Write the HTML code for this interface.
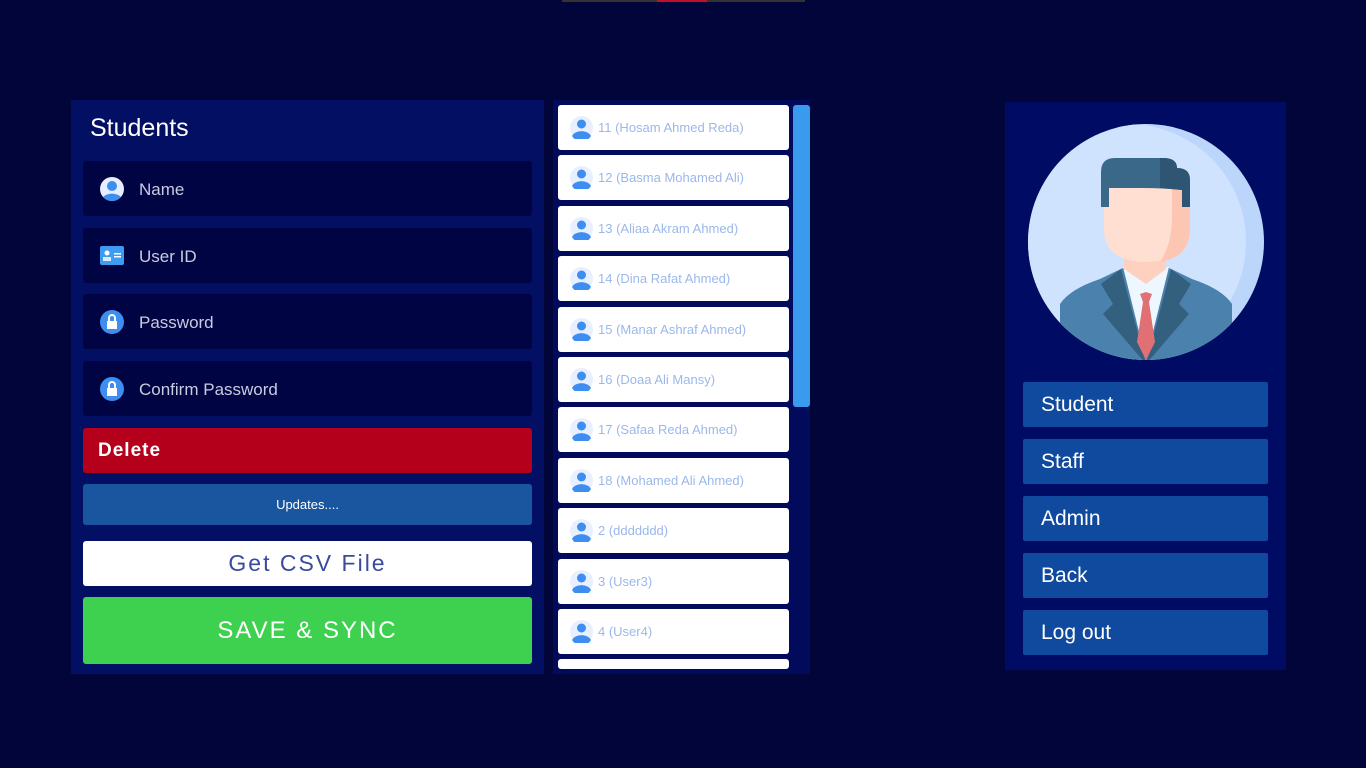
<!DOCTYPE html><html><head><style>
body{margin:0;width:1366px;height:768px;background:#01053a;font-family:"Liberation Sans",sans-serif;position:relative;overflow:hidden}
.a{position:absolute}
.inp{position:absolute;left:83px;width:449px;height:55px;background:#000442;border-radius:3px;color:#c9cbe0;font-size:17px}
.inp span{position:absolute;left:56px;top:19px}
.inp svg{position:absolute;left:17px;top:16px}
.it{position:absolute;left:558px;width:231px;height:45px;background:#fff;border-radius:3px;color:#9bb8ea;font-size:13px}
.it span{position:absolute;left:40px;top:15px}
.it svg{position:absolute;left:12px;top:11px}
.rb{position:absolute;left:1023px;width:245px;height:45px;background:#0f4a9e;color:#fff;font-size:21px;border-radius:2px}
.rb span{position:absolute;left:18px;top:11px}
</style></head><body>
<div class="a" style="left:562px;top:0;width:243px;height:2px;background:#333"></div>
<div class="a" style="left:657px;top:0;width:50px;height:2px;background:#c0102a"></div>
<div class="a" style="left:71px;top:100px;width:473px;height:574px;background:#020f63"></div>
<div class="a" style="left:90px;top:114px;color:#fff;font-size:25px">Students</div>
<div class="inp" style="top:161px"><svg width="24" height="24"><circle cx="12" cy="12" r="12" fill="#e6eeff"/><circle cx="12" cy="9" r="5" fill="#3d8ef0"/><path d="M3 20a11 8 0 0 1 18 0a12 12 0 0 1-18 0z" fill="#3d8ef0"/></svg><span>Name</span></div>
<div class="inp" style="top:228px"><svg width="24" height="20" style="top:18px"><rect width="24" height="19" rx="2" fill="#3d9cf0"/><circle cx="7" cy="7" r="2.5" fill="#fff"/><rect x="3" y="11" width="8" height="4" fill="#d8ecff"/><rect x="14" y="7" width="7" height="1.5" fill="#fff"/><rect x="14" y="10" width="7" height="1.5" fill="#fff"/></svg><span>User ID</span></div>
<div class="inp" style="top:294px"><svg width="24" height="24"><circle cx="12" cy="12" r="12" fill="#3d8ef0"/><rect x="7" y="11" width="10" height="8" fill="#fff"/><path d="M9 11V8a3 3 0 0 1 6 0v3" stroke="#fff" stroke-width="2" fill="none"/></svg><span>Password</span></div>
<div class="inp" style="top:361px"><svg width="24" height="24"><circle cx="12" cy="12" r="12" fill="#3d8ef0"/><rect x="7" y="11" width="10" height="8" fill="#fff"/><path d="M9 11V8a3 3 0 0 1 6 0v3" stroke="#fff" stroke-width="2" fill="none"/></svg><span>Confirm Password</span></div>
<div class="a" style="left:83px;top:428px;width:449px;height:45px;background:#b5001c;border-radius:3px;color:#fff;font-size:19px;font-weight:bold;letter-spacing:1px"><span class="a" style="left:15px;top:12px">Delete</span></div>
<div class="a" style="left:83px;top:484px;width:449px;height:41px;background:#1a56a0;border-radius:3px;color:#fff;font-size:13px;text-align:center;line-height:41px">Updates....</div>
<div class="a" style="left:83px;top:541px;width:449px;height:45px;background:#fff;border-radius:3px;color:#3a4a9e;font-size:23px;text-align:center;line-height:45px;letter-spacing:2px">Get CSV File</div>
<div class="a" style="left:83px;top:597px;width:449px;height:67px;background:#3dd14f;border-radius:3px;color:#fff;font-size:24px;text-align:center;line-height:67px;letter-spacing:2px">SAVE &amp; SYNC</div>
<div class="a" style="left:553px;top:100px;width:257px;height:574px;background:#020a5c"></div>
<div class="a" style="left:793px;top:105px;width:17px;height:302px;background:#3a9aee;border-radius:3px"></div>
<div id="list"></div>
<div class="a" style="left:1005px;top:102px;width:281px;height:568px;background:#000c63"></div>
<svg class="a" style="left:1028px;top:124px" width="236" height="236" viewBox="0 0 236 236">
<defs><clipPath id="c"><circle cx="118" cy="118" r="118"/></clipPath></defs>
<circle cx="118" cy="118" r="118" fill="#bcd6fb"/>
<g clip-path="url(#c)">
<circle cx="100" cy="118" r="118" fill="#cfe3ff"/>
<path d="M32 180q10-15 40-25l25-12h42l25 12q30 10 40 25v60H32z" fill="#4b81ad"/>
<path d="M95 143l23 93l23-93z" fill="#eef6ff"/>
<path d="M93 145l-20 15l12 20l-10 10l43 50z M143 145l20 15l-12 20l10 10l-43 50z" fill="#34607f"/>
<path d="M112 170l6-2l6 2l-3 8l6 40l-9 18l-9-18l6-40z" fill="#e07073"/>
<path d="M96 110h42v35l-20 15l-22-15z" fill="#fdd0c0"/>
<path d="M76 60h86v45q0 32-44 33q-42-1-42-33z" fill="#ffdfd2"/>
<path d="M118 60h44v45q0 28-30 33q12-18 12-45v-33z" fill="#fdc6b2"/>
<path d="M73 83V48q0-14 14-14h48q14 0 14 10q13 0 13 12v27h-8V66q-20-2-40-2h-33v19z" fill="#3a6888"/>
<path d="M132 34h3q14 0 14 10q13 0 13 12v27h-8V66q-10-1-22-2z" fill="#2e5672"/>
</g></svg>
<div class="rb" style="top:382px"><span>Student</span></div>
<div class="rb" style="top:439px"><span>Staff</span></div>
<div class="rb" style="top:496px"><span>Admin</span></div>
<div class="rb" style="top:553px"><span>Back</span></div>
<div class="rb" style="top:610px"><span>Log out</span></div>
<script>
var n=["11 (Hosam Ahmed Reda)","12 (Basma Mohamed Ali)","13 (Aliaa Akram Ahmed)","14 (Dina Rafat Ahmed)","15 (Manar Ashraf Ahmed)","16 (Doaa Ali Mansy)","17 (Safaa Reda Ahmed)","18 (Mohamed Ali Ahmed)","2 (ddddddd)","3 (User3)","4 (User4)",""];
var h="";n.forEach(function(t,i){var top=105+i*50.4;var hh=i==11?10:45;h+='<div class="it" style="top:'+top+'px;height:'+hh+'px">'+(t?'<svg width="23" height="23"><circle cx="11.5" cy="11.5" r="11.5" fill="#e8efff"/><circle cx="11.5" cy="8" r="4.5" fill="#3d8ef0"/><path d="M2 20a10 7 0 0 1 19 0a11 11 0 0 1-19 0z" fill="#3d8ef0"/></svg><span>'+t+'</span>':'')+'</div>';});
document.getElementById("list").innerHTML=h;
</script>
</body></html>
